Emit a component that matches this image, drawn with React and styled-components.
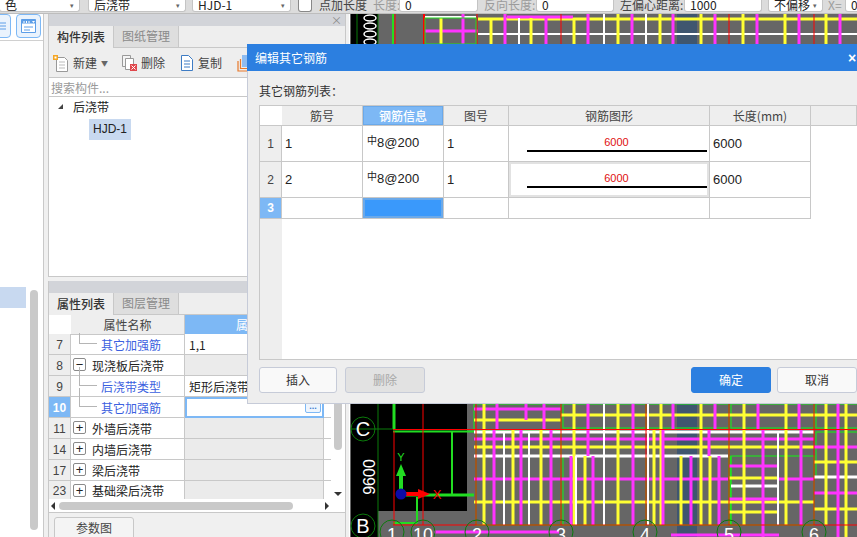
import React from "react";
import styled, { createGlobalStyle } from "styled-components";

const FONT = `"Noto Sans CJK SC", "Liberation Sans", sans-serif`;

const GlobalStyle = createGlobalStyle`
  html, body {
    margin: 0;
    padding: 0;
    width: 857px;
    height: 537px;
    overflow: hidden;
    background: #fff;
    font-family: ${FONT};
    font-size: 12px;
    color: #222;
  }
  * { box-sizing: border-box; }
`;

const Page = styled.div`
  position: relative;
  width: 857px;
  height: 537px;
  overflow: hidden;
  display: flex;
  flex-direction: column;
`;

/* top toolbar, cut off by the top of the window */
const TopBar = styled.div`
  height: 14px;
  flex: none;
  background: #dcdcdc;
  border-bottom: 1px solid #bdbdbd;
  display: flex;
  align-items: flex-start;
  overflow: hidden;
  font-size: 12px;
`;
const TopField = styled.div`
  flex: none;
  width: ${(p) => p.$w}px;
  margin-left: ${(p) => p.$ml || 0}px;
  height: 12px;
  background: #fff;
  border: 1px solid #c4c4c4;
  border-top: none;
  border-radius: 0 0 3px 3px;
  padding: 0 5px;
  display: flex;
  align-items: flex-start;
  justify-content: space-between;
  white-space: nowrap;
  line-height: 9px;
  overflow: hidden;
`;
const Caret = styled.span`
  color: #666;
  font-size: 7px;
  line-height: 10px;
`;
const TopCheck = styled.div`
  flex: none;
  width: 14px;
  height: 12px;
  margin-left: 7px;
  background: #fff;
  border: 1px solid #888;
  border-top: none;
  border-radius: 0 0 3px 3px;
`;
const TopLabel = styled.span`
  flex: none;
  margin-left: ${(p) => p.$ml || 0}px;
  width: ${(p) => p.$w}px;
  color: ${(p) => (p.$dim ? "#9b9b9b" : "#444")};
  white-space: nowrap;
  overflow: hidden;
  height: 12px;
  line-height: 9px;
`;

const Body = styled.div`
  flex: 1;
  display: flex;
  min-height: 0;
`;

/* far left strip */
const SideBar = styled.div`
  flex: none;
  width: 44px;
  background: #fff;
  border-right: 1px solid #c9c9c9;
  display: flex;
  flex-direction: column;
  position: relative;
`;
const SideTools = styled.div`
  height: 27px;
  border-bottom: 1px solid #d0d0d0;
  display: flex;
  gap: 5px;
  margin-left: -5px;
  align-items: flex-start;
`;
const SideTool = styled.div`
  width: 16px;
  height: 24px;
  flex: none;
  background: #eaf3fd;
  border: 1px solid #7db8f5;
  border-radius: 4px;
  display: flex;
  align-items: center;
  justify-content: center;
  & + & { width: 25px; }
`;
const SideRow = styled.div`
  width: 26px;
  height: 21px;
  margin-top: 246px;
  background: #c8d9f0;
`;
const SideScroll = styled.div`
  position: absolute;
  left: 30px;
  top: 276px;
  width: 8px;
  height: 240px;
  border-radius: 4px;
  background: #c9c9c9;
`;

/* component + property panels */
const PanelColumn = styled.div`
  flex: none;
  width: 305px;
  padding: 0 3px 0 4px;
  background: #f0f0f0;
  display: flex;
  flex-direction: column;
`;
const Panel = styled.div`
  flex: ${(p) => (p.$grow ? 1 : "none")};
  height: ${(p) => (p.$h ? p.$h + "px" : "auto")};
  border: 1px solid #c8c8c8;
  border-top: none;
  background: #fff;
  display: flex;
  flex-direction: column;
`;
const PanelTitle = styled.div`
  height: 12px;
  flex: none;
  background: #d2d4d9;
  display: flex;
  align-items: center;
  justify-content: flex-end;
  padding-right: 3px;
  color: #8b8b8b;
  font-size: 11px;
  line-height: 12px;
`;
const Tabs = styled.div`
  height: 22px;
  flex: none;
  display: flex;
  background: #eeeeee;
  border-bottom: 1px solid #c8c8c8;
`;
const Tab = styled.div`
  width: 65px;
  padding-bottom: 2px;
  display: flex;
  align-items: center;
  justify-content: center;
  font-size: 12px;
  font-weight: ${(p) => (p.$active ? 500 : 400)};
  color: ${(p) => (p.$active ? "#333" : "#8a8a8a")};
  background: ${(p) => (p.$active ? "#eeeeee" : "#dedede")};
  border-right: 1px solid #c8c8c8;
  ${(p) => p.$active && "margin-bottom: -1px;"}
`;
const ToolRow = styled.div`
  height: 30px;
  flex: none;
  background: #eeeeee;
  border-bottom: 1px solid #c8c8c8;
  display: flex;
  align-items: center;
  padding-left: 4px;
  overflow: hidden;
`;
const ToolButton = styled.div`
  display: flex;
  align-items: center;
  gap: 4px;
  flex: none;
  margin-right: ${(p) => p.$gap}px;
  color: #444;
  white-space: nowrap;
`;
const Search = styled.div`
  height: 19px;
  flex: none;
  border-bottom: 1px solid #c8c8c8;
  padding-left: 2px;
  color: #9a9a9a;
  line-height: 19px;
`;
const Tree = styled.div`
  flex: 1;
  padding: 0 0 0 9px;
`;
const TreeRoot = styled.div`
  display: flex;
  align-items: center;
  height: 19px;
  gap: 10px;
`;
const TreeArrow = styled.span`
  width: 0;
  height: 0;
  border-left: 5px solid transparent;
  border-bottom: 5px solid #444;
`;
const TreeLeaf = styled.div`
  margin: 3px 0 0 31px;
  width: 42px;
  height: 21px;
  background: #c8d9f0;
  font-size: 12px;
  line-height: 21px;
  text-align: center;
  font-family: "Liberation Sans", sans-serif;
`;

const Gap = styled.div`
  height: 4px;
  flex: none;
`;

/* property grid */
const PropGrid = styled.div`
  flex: 1;
  min-height: 0;
  overflow: hidden;
  position: relative;
  display: flex;
  flex-direction: column;
`;
const PropHeader = styled.div`
  height: 19px;
  flex: none;
  display: grid;
  grid-template-columns: 22px 114px 139px 7px;
  line-height: 19px;
  text-align: center;
`;
const PropHeadCell = styled.div`
  background: ${(p) => (p.$on ? "#7db8f5" : p.$blank ? "#fff" : "#eeeeee")};
  color: ${(p) => (p.$on ? "#fff" : "#444")};
  border-bottom: 1px solid #c8c8c8;
  border-right: ${(p) => (p.$blank ? "none" : "1px solid #c8c8c8")};
`;
const PropRow = styled.div`
  height: ${(p) => p.$h || 21}px;
  flex: none;
  display: grid;
  grid-template-columns: 22px 114px 139px 7px;
`;
const RowNum = styled.div`
  background: ${(p) => (p.$on ? "#7db8f5" : "#eeeeee")};
  color: ${(p) => (p.$on ? "#fff" : "#444")};
  font-weight: ${(p) => (p.$on ? 700 : 400)};
  font-family: "Liberation Sans", sans-serif;
  font-size: 12px;
  padding-top: 1px;
  display: flex;
  align-items: center;
  justify-content: center;
  border-bottom: 1px solid #c8c8c8;
  border-right: 1px solid #c8c8c8;
`;
const NameCell = styled.div`
  position: relative;
  display: flex;
  align-items: center;
  padding: 1px 0 0 ${(p) => (p.$child ? 30 : 21)}px;
  color: ${(p) => (p.$child ? "#3b5fe0" : "#222")};
  border-bottom: 1px solid #c8c8c8;
  border-right: 1px solid #c8c8c8;
  white-space: nowrap;
`;
const TreeLine = styled.span`
  position: absolute;
  left: 8px;
  top: ${(p) => (p.$top ? -9 : -1)}px;
  height: ${(p) => (p.$top ? 19 : 11)}px;
  width: 18px;
  border-left: 1px solid #b5b5b5;
  border-bottom: 1px solid #b5b5b5;
`;
const Toggle = styled.span`
  position: absolute;
  left: 2px;
  top: 3px;
  width: 13px;
  height: 13px;
  background: #fff;
  border: 1px solid #8a8a8a;
  border-radius: 2px;
  font: 13px/11px "Liberation Sans", sans-serif;
  text-align: center;
  color: #222;
`;
const ValueCell = styled.div`
  background: ${(p) => (p.$grey ? "#ebebeb" : "#fff")};
  display: flex;
  align-items: center;
  justify-content: space-between;
  padding: 1px 0 0 4px;
  border-bottom: 1px solid #c8c8c8;
  border-right: 1px solid #c8c8c8;
  white-space: nowrap;
  overflow: hidden;
  ${(p) => p.$edit && "border: 2px solid #7db8f5; padding: 0 1px 0 3px;"}
`;
const EndCell = styled.div`
  border-bottom: 1px solid #c8c8c8;
`;
const EllipsisBtn = styled.span`
  margin-left: auto;
  width: 16px;
  height: 11px;
  border: 1px solid #7db8f5;
  border-radius: 2px;
  background: #eef5fd;
  color: #3f7fd0;
  font: 700 9px/6px "Liberation Sans", sans-serif;
  text-align: center;
`;
const VScrollThumb = styled.div`
  position: absolute;
  right: 3px;
  top: 38px;
  width: 8px;
  height: 97px;
  border-radius: 4px;
  background: #c9c9c9;
`;
const VScrollDown = styled.div`
  position: absolute;
  right: 3px;
  bottom: 3px;
  border-left: 4px solid transparent;
  border-right: 4px solid transparent;
  border-top: 4px solid #333;
`;
const HScroll = styled.div`
  height: 14px;
  flex: none;
  background: #fff;
  display: flex;
  align-items: center;
  padding: 0 2px;
  gap: 4px;
  border-bottom: 1px solid #c8c8c8;
`;
const HArrow = styled.span`
  border-top: 4px solid transparent;
  border-bottom: 4px solid transparent;
  ${(p) => (p.$left ? "border-right: 4px solid #333;" : "border-left: 4px solid #333;")}
  ${(p) => !p.$left && "margin-left: 28px;"}
`;
const HThumb = styled.div`
  width: 234px;
  height: 8px;
  border-radius: 4px;
  background: #c9c9c9;
`;
const Footer = styled.div`
  height: 24px;
  flex: none;
  background: #f0f0f0;
  padding: 4px 0 0 5px;
`;
const FooterTab = styled.div`
  width: 80px;
  height: 24px;
  background: #f4f4f4;
  border: 1px solid #c8c8c8;
  border-radius: 3px 3px 0 0;
  text-align: center;
  line-height: 20px;
  color: #444;
`;

/* CAD canvas */
const Canvas = styled.div`
  flex: 1;
  min-width: 0;
  background: #fff;
  padding-left: 1px;
  svg { display: block; }
`;

/* modal dialog */
const Dialog = styled.div`
  position: absolute;
  left: 247px;
  top: 44px;
  width: 612px;
  height: 360px;
  background: #eeeeee;
  border: 1px solid #c6cbd8;
  border-top: none;
  display: flex;
  flex-direction: column;
`;
const DialogHead = styled.div`
  height: 27px;
  flex: none;
  margin-left: -1px;
  margin-right: -1px;
  background: #2c7fe0;
  color: #fff;
  display: flex;
  align-items: center;
  justify-content: space-between;
  padding: 0 0 0 8px;
  font-size: 12px;
`;
const CloseMark = styled.span`
  width: 11px;
  color: #fff;
  font: 700 14px/14px "Liberation Sans", sans-serif;
`;
const DialogBody = styled.div`
  flex: 1;
  padding: 11px 0 12px 11px;
  display: flex;
  flex-direction: column;
  min-height: 0;
`;
const ListLabel = styled.div`
  height: 23px;
  line-height: 17px;
  flex: none;
  color: #333;
`;
const RebarGrid = styled.div`
  height: 255px;
  flex: none;
  background: #fff;
  border: 1px solid #c8c8c8;
  display: flex;
  flex-direction: column;
  position: relative;
`;
const RebarRow = styled.div`
  height: ${(p) => p.$h}px;
  flex: none;
  display: grid;
  grid-template-columns: 22px 81px 81px 65px 201px 101px ${(p) => (p.$head ? "1fr" : "")};
`;
const RebarHeadCell = styled.div`
  background: ${(p) => (p.$on ? "#7db8f5" : p.$blank ? "#fff" : "#eeeeee")};
  color: ${(p) => (p.$on ? "#fff" : "#444")};
  font-weight: ${(p) => (p.$on ? 500 : 400)};
  text-align: center;
  line-height: 19px;
  border-bottom: 1px solid #c8c8c8;
  border-right: ${(p) => (p.$blank ? "none" : "1px solid #c8c8c8")};
  ${(p) => p.$on && "box-shadow: inset 0 0 0 1px #6aa9ea;"}
`;
const RebarNum = styled.div`
  background: ${(p) => (p.$on ? "#7db8f5" : "#eeeeee")};
  color: ${(p) => (p.$on ? "#fff" : "#444")};
  font-weight: ${(p) => (p.$on ? 700 : 400)};
  font-family: "Liberation Sans", sans-serif;
  display: flex;
  align-items: center;
  justify-content: center;
  border-bottom: 1px solid #c8c8c8;
  border-right: 1px solid #c8c8c8;
`;
const RebarCell = styled.div`
  padding: ${(p) => (p.$info ? "0 0 3px 4px" : "0 0 0 3px")};
  display: flex;
  align-items: center;
  font-family: "Liberation Sans", "Noto Sans CJK SC", sans-serif;
  font-size: 13px;
  color: #222;
  background: ${(p) => (p.$sel ? "#3a99fb" : "#fff")};
  border-bottom: 1px solid #c8c8c8;
  border-right: 1px solid #c8c8c8;
  ${(p) => p.$sel && "box-shadow: inset 0 0 0 2px #6aa9ea;"}
`;
const RebarGrade = styled.span`
  font-size: 10px;
  line-height: 0;
  position: relative;
  top: -3px;
`;
const ShapeCell = styled.div`
  display: flex;
  flex-direction: column;
  align-items: center;
  justify-content: flex-start;
  padding: 9px 0 0 15px;
  border-bottom: 1px solid #c8c8c8;
  border-right: 1px solid #c8c8c8;
  ${(p) => p.$framed && "box-shadow: inset 0 0 0 2px #e2e2e2;"}
`;
const ShapeLen = styled.span`
  color: #e01010;
  font: 11px/14px "Liberation Sans", sans-serif;
`;
const ShapeBar = styled.span`
  width: 180px;
  height: 2px;
  background: #000;
  margin-top: 1px;
`;
const RebarFill = styled.div`
  flex: 1;
  width: 22px;
  background: #eeeeee;
`;
const BtnRow = styled.div`
  display: flex;
  margin-top: 7px;
  gap: 8px;
  height: 26px;
  flex: none;
`;
const Btn = styled.div`
  flex: none;
  width: ${(p) => p.$w}px;
  margin-left: ${(p) => p.$ml || 0}px;
  border: 1px solid ${(p) => (p.$primary ? "#2c7fe0" : "#c6cbd8")};
  border-radius: 3px;
  background: ${(p) => (p.$primary ? "#2c7fe0" : p.$off ? "#e2e2e2" : "#f9f9f9")};
  color: ${(p) => (p.$primary ? "#fff" : p.$off ? "#a8a8a8" : "#333")};
  text-align: center;
  line-height: 24px;
`;

const NewIcon = () => (
  <svg width="16" height="18" viewBox="0 0 16 18">
    <path d="M3.500 3.500h8l3 3v11h-11z" fill="#fff" stroke="#999" />
    <path d="M6 8h6M6 11h6M6 14h6" stroke="#bbb" />
    <path d="M0 1h5v5H0z" fill="#f5a623" />
    <path d="M1.500 2.500h2v2h-2z" fill="#fff" />
  </svg>
);
const DeleteIcon = () => (
  <svg width="16" height="18" viewBox="0 0 16 18">
    <path d="M1.500 1.500h8v11h-8z" fill="#f4f4f4" stroke="#999" />
    <path d="M4.500 4.500h8v11h-8z" fill="#fff" stroke="#999" />
    <path d="M9 10h7v7H9z" fill="#e0474c" />
    <path d="M10.500 11.500l4 4M14.500 11.500l-4 4" stroke="#fff" />
  </svg>
);
const CopyIcon = () => (
  <svg width="14" height="18" viewBox="0 0 14 18">
    <path d="M1.500 1.500h7l4 4v11h-11z" fill="#fff" stroke="#3e7cc4" />
    <path d="M4 7h6M4 10h6M4 13h6" stroke="#3e7cc4" />
  </svg>
);
const PasteIcon = () => (
  <svg width="14" height="18" viewBox="0 0 14 18">
    <path d="M1 7v10h9" fill="none" stroke="#e8792b" strokeWidth="1.200" />
    <path d="M3.500 5v9.500h9" fill="none" stroke="#e8792b" strokeWidth="1.200" />
    <path d="M5 1h9v12H5z" fill="#8fbcf0" />
  </svg>
);
const WindowIcon = () => (
  <svg width="15" height="14" viewBox="0 0 15 14">
    <path d="M0.500 0.500h14v13h-14z" fill="#fff" stroke="#5c9ee8" />
    <path d="M0.500 0.500h14v4h-14z" fill="#5c9ee8" />
    <path d="M3 2v2M5.500 2v2M8 2v2" stroke="#fff" />
    <path d="M11 2h3l-1.500 2z" fill="#fff" />
    <path d="M3 8h9M3 11h6" stroke="#5c9ee8" />
  </svg>
);
const ListIcon = () => (
  <svg width="12" height="12" viewBox="0 0 12 12">
    <path d="M0 3h9M0 6h9M0 9h9" stroke="#5c9ee8" />
  </svg>
);

/* canvas picture coordinates are page px minus (349, 14) */
const OX = 349;
const OY = 14;
const GREY = "#666666";
const YEL = "#ffff33";
const MAG = "#ff33ff";
const GRN = "#22dd22";
const RED = "#ff0000";

const L = ({ x1, y1, x2, y2, c, w = 1 }) => (
  <line x1={x1 - OX} y1={y1 - OY} x2={x2 - OX} y2={y2 - OY} stroke={c} strokeWidth={w} />
);
const V = (x, a, b, c, w) => <L key={`v${x}-${a}-${c}`} x1={x} y1={a} x2={x} y2={b} c={c} w={w} />;
const H = (y, a, b, c, w) => <L key={`h${y}-${a}-${c}`} x1={a} y1={y} x2={b} y2={y} c={c} w={w} />;

const topStrip = [
  [H, 19, 477, 857, YEL, 3],
  [H, 34, 477, 857, "#fff", 2],
  [H, 17, 506, 572, MAG, 3],
  [H, 31, 422, 477, MAG, 3],
  [H, 17, 423, 475, "#fff", 2],
  [V, 440, 18, 44, YEL, 3],
  [V, 490, 18, 44, YEL, 3],
  [V, 530, 18, 44, YEL, 3],
  [V, 573, 18, 44, YEL, 3],
  [V, 617, 14, 44, YEL, 3],
  [V, 659, 14, 44, YEL, 3],
  [V, 700, 14, 44, YEL, 3],
  [V, 742, 14, 44, YEL, 3],
  [V, 784, 14, 44, YEL, 3],
  [V, 825, 14, 44, YEL, 3],
  [V, 518, 18, 44, "#fff", 2],
  [V, 603, 14, 44, "#fff", 2],
  [V, 645, 14, 44, "#fff", 2],
  [V, 462, 14, 44, MAG, 3],
  [V, 504, 14, 44, MAG, 3],
  [V, 545, 18, 44, MAG, 3],
  [V, 587, 14, 44, MAG, 3],
  [V, 631, 14, 44, MAG, 3],
  [V, 672, 14, 44, MAG, 3],
  [V, 714, 14, 44, MAG, 3],
  [V, 756, 14, 44, MAG, 3],
  [V, 798, 14, 44, MAG, 3],
  [V, 839, 14, 44, MAG, 3],
  [V, 392, 14, 44, GRN, 2],
  [V, 394, 14, 44, RED, 1],
  [V, 423, 14, 44, RED, 2],
  [V, 476, 14, 44, RED, 1],
  [V, 560, 14, 44, RED, 1],
  [V, 728, 14, 44, RED, 1],
  [V, 813, 14, 44, RED, 1],
];

const bottomVertical = [
  [483, 404, 525, YEL],
  [512, 430, 525, YEL],
  [540, 430, 525, YEL],
  [573, 404, 525, YEL],
  [584, 456, 525, YEL],
  [617, 404, 525, YEL],
  [660, 404, 525, YEL],
  [653, 430, 525, YEL],
  [700, 404, 525, YEL],
  [680, 456, 525, YEL],
  [709, 456, 525, YEL],
  [743, 404, 525, YEL],
  [785, 404, 525, YEL],
  [825, 404, 525, YEL],
  [845, 404, 537, YEL],
  [503, 432, 525, "#fff"],
  [528, 432, 525, "#fff"],
  [575, 456, 525, "#fff"],
  [603, 404, 525, "#fff"],
  [647, 404, 525, "#fff"],
  [777, 432, 525, "#fff"],
  [493, 430, 525, MAG],
  [496, 404, 430, MAG],
  [520, 430, 525, MAG],
  [525, 404, 420, MAG],
  [543, 404, 430, MAG],
  [550, 430, 525, MAG],
  [570, 456, 525, MAG],
  [587, 404, 456, MAG],
  [592, 456, 525, MAG],
  [632, 404, 525, MAG],
  [662, 430, 525, MAG],
  [672, 404, 430, MAG],
  [690, 456, 525, MAG],
  [708, 430, 456, MAG],
  [714, 404, 430, MAG],
  [718, 456, 525, MAG],
  [757, 404, 430, MAG],
  [762, 430, 537, MAG],
  [798, 404, 430, MAG],
  [800, 430, 525, MAG],
  [837, 404, 537, MAG],
];

const bottomHorizontal = [
  [415, 560, 857, YEL],
  [420, 473, 560, YEL],
  [447, 473, 813, YEL],
  [502, 473, 813, YEL],
  [478, 728, 778, YEL],
  [512, 728, 778, YEL],
  [462, 813, 857, YEL],
  [509, 813, 857, YEL],
  [432, 473, 813, "#fff"],
  [456, 473, 727, "#fff"],
  [486, 730, 778, "#fff"],
  [477, 813, 857, "#fff"],
  [409, 473, 560, MAG],
  [439, 473, 813, MAG],
  [479, 473, 727, MAG],
  [479, 778, 813, MAG],
  [466, 728, 778, MAG],
  [499, 728, 778, MAG],
  [447, 813, 857, MAG],
  [493, 813, 857, MAG],
  [532, 433, 558, MAG],
  [535, 670, 778, MAG],
];

const axisBubbles = [
  [391, "1"],
  [422, "10"],
  [476, "2"],
  [560, "3"],
  [644, "4"],
  [728, "5"],
  [813, "6"],
];

const CadDrawing = () => (
  <svg width="508" height="523" viewBox="0 0 508 523" fontFamily="'Liberation Sans', sans-serif">
    <rect x="0" y="0" width="508" height="523" fill={GREY} />
    {/* black axis column + upper block */}
    <rect x="1" y="0" width="27" height="30" fill="#000" />
    <rect x="1" y="390" width="27" height="133" fill="#000" />
    <rect x="28" y="390" width="89" height="107" fill="#000" />
    <rect x="327" y="0" width="20" height="523" fill="#3f566f" />
    {V(377, 14, 44, "#0b7a0b", 1)}
    {V(356, 14, 44, "#0b7a0b", 1)}
    {[16, 24, 32, 40].map((y) => (
      <ellipse key={y} cx={369 - OX} cy={y - OY + 2} rx="6" ry="3" fill="none" stroke="#fff" strokeWidth="1.500" />
    ))}
    {topStrip.map(([fn, ...args], i) => (
      <React.Fragment key={i}>{fn(...args)}</React.Fragment>
    ))}
    <rect x="75" y="4" width="51" height="26" fill="none" stroke={GRN} />

    {/* green room outlines */}
    {[
      [473, 404, 87, 26],
      [562, 404, 83, 24],
      [647, 404, 81, 24],
      [730, 404, 83, 24],
      [815, 404, 42, 24],
      [475, 432, 85, 93],
      [562, 456, 83, 69],
      [647, 432, 81, 93],
      [730, 456, 83, 69],
      [815, 432, 42, 45],
    ].map(([x, y, w, h]) => (
      <rect key={`${x}-${y}`} x={x - OX} y={y - OY} width={w} height={h} fill="none" stroke={GRN} strokeWidth="1.200" />
    ))}
    {V(729, 456, 525, GRN, 3)}
    {bottomHorizontal.map(([y, a, b, c]) => H(y, a, b, c, 3))}
    {bottomVertical.map(([x, a, b, c]) => V(x, a, b, c, c === "#fff" ? 2 : 3))}

    {/* drawing lines on black */}
    {V(393, 404, 429, GRN, 3)}
    {H(431.5, 392, 473, GRN, 2)}
    {V(451, 431, 495, GRN, 2)}
    {H(495, 405, 473, GRN, 3)}
    {V(416, 497, 523, GRN, 2)}
    {H(523, 392, 416, GRN, 2)}
    {V(393, 431, 525, RED, 1)}
    {V(422, 404, 525, RED, 1)}
    {V(475, 404, 525, RED, 1)}
    {V(560, 404, 525, RED, 1)}
    {V(645, 404, 525, RED, 1)}
    {V(728, 404, 525, RED, 1)}
    {V(813, 404, 525, RED, 1)}
    {H(429.500, 392, 857, RED, 1)}
    {H(525, 392, 857, RED, 1)}
    {H(429, 350, 392, "#0b7a0b", 1)}
    {V(377, 404, 537, "#0b7a0b", 1)}

    {/* axis bubbles */}
    <circle cx={362 - OX} cy={429 - OY} r="12" fill="none" stroke="#0b7a0b" />
    <text x={362 - OX} y={436 - OY} fontSize="20" fill="#fff" textAnchor="middle">C</text>
    <circle cx={362 - OX} cy={526 - OY} r="12" fill="none" stroke="#0b7a0b" />
    <text x={362 - OX} y={533 - OY} fontSize="20" fill="#fff" textAnchor="middle">B</text>
    <text
      x="0"
      y="0"
      fontSize="16"
      fill="#fff"
      textAnchor="middle"
      transform={`translate(${374 - OX} ${477 - OY}) rotate(-90)`}
    >
      9600
    </text>
    {axisBubbles.map(([x, t]) => (
      <g key={t}>
        <circle cx={x - OX} cy={532 - OY} r="12" fill="none" stroke="#0b7a0b" />
        <text x={x - OX} y={541 - OY} fontSize="18" fill="#fff" textAnchor="middle">{t}</text>
      </g>
    ))}

    {/* UCS axes */}
    <rect x={398 - OX} y={475 - OY} width="4" height="16" fill={GRN} />
    <path d={`M${400 - OX} ${464 - OY}l5 12h-10z`} fill={GRN} />
    <text x={400 - OX} y={461 - OY} fontSize="11" fill={GRN} textAnchor="middle">Y</text>
    <rect x={404 - OX} y={492 - OY} width="14" height="4" fill={RED} />
    <path d={`M${429 - OX} ${494 - OY}l-12 -5v10z`} fill={RED} />
    <text x={436 - OX} y={499 - OY} fontSize="13" fill={RED} textAnchor="middle">X</text>
    <circle cx={400 - OX} cy={494 - OY} r="5.500" fill="#0b0ba8" />
  </svg>
);

const propRows = [
  { n: "7", name: "其它加强筋", child: true, value: "1,1" },
  { n: "8", name: "现浇板后浇带", toggle: "−", grey: true },
  { n: "9", name: "后浇带类型", child: true, value: "矩形后浇带" },
  { n: "10", name: "其它加强筋", child: true, edit: true, on: true },
  { n: "11", name: "外墙后浇带", toggle: "+", grey: true },
  { n: "14", name: "内墙后浇带", toggle: "+", grey: true },
  { n: "17", name: "梁后浇带", toggle: "+", grey: true },
  { n: "23", name: "基础梁后浇带", toggle: "+", grey: true, h: 18 },
];

const rebarRows = [
  { n: "1", no: "1" },
  { n: "2", no: "2", framed: true },
];

export default function App() {
  return (
    <Page>
      <GlobalStyle />
      <TopBar>
        <TopField $w={81} $ml={-1}>
          <span>色</span>
          <Caret>▾</Caret>
        </TopField>
        <TopField $w={98} $ml={8}>
          <span>后浇带</span>
          <Caret>▾</Caret>
        </TopField>
        <TopField $w={99} $ml={6}>
          <span>HJD-1</span>
          <Caret>▾</Caret>
        </TopField>
        <TopCheck />
        <TopLabel $ml={7} $w={48}>点加长度</TopLabel>
        <TopLabel $dim $ml={6} $w={26}>长度:</TopLabel>
        <TopField $w={79}>0</TopField>
        <TopLabel $dim $ml={6} $w={52}>反向长度:</TopLabel>
        <TopField $w={78}>0</TopField>
        <TopLabel $ml={6} $w={64}>左偏心距离:</TopLabel>
        <TopField $w={78}>1000</TopField>
        <TopField $w={55} $ml={6}>
          <span>不偏移</span>
          <Caret>▾</Caret>
        </TopField>
        <TopLabel $dim $ml={5} $w={17}>X=</TopLabel>
        <TopField $w={20}>0</TopField>
      </TopBar>
      <Body>
        <SideBar>
          <SideTools>
            <SideTool>
              <ListIcon />
            </SideTool>
            <SideTool>
              <WindowIcon />
            </SideTool>
          </SideTools>
          <SideRow />
          <SideScroll />
        </SideBar>
        <PanelColumn>
          <Panel $h={263}>
            <PanelTitle>×</PanelTitle>
            <Tabs>
              <Tab $active>构件列表</Tab>
              <Tab>图纸管理</Tab>
            </Tabs>
            <ToolRow>
              <ToolButton $gap={13}>
                <NewIcon />
                新建
                <Caret>▼</Caret>
              </ToolButton>
              <ToolButton $gap={15}>
                <DeleteIcon />
                删除
              </ToolButton>
              <ToolButton $gap={15}>
                <CopyIcon />
                复制
              </ToolButton>
              <ToolButton $gap={0}>
                <PasteIcon />
              </ToolButton>
            </ToolRow>
            <Search>搜索构件...</Search>
            <Tree>
              <TreeRoot>
                <TreeArrow />
                后浇带
              </TreeRoot>
              <TreeLeaf>HJD-1</TreeLeaf>
            </Tree>
          </Panel>
          <Gap />
          <Panel $grow>
            <PanelTitle />
            <Tabs>
              <Tab $active>属性列表</Tab>
              <Tab>图层管理</Tab>
            </Tabs>
            <PropGrid>
              <PropHeader>
                <PropHeadCell $blank />
                <PropHeadCell>属性名称</PropHeadCell>
                <PropHeadCell $on>属性值</PropHeadCell>
                <PropHeadCell $blank />
              </PropHeader>
              {propRows.map((r) => (
                <PropRow key={r.n} $h={r.h}>
                  <RowNum $on={r.on}>{r.n}</RowNum>
                  <NameCell $child={r.child}>
                    {r.child && <TreeLine $top={r.n === "10" || r.n === "9"} />}
                    {r.toggle && <Toggle>{r.toggle}</Toggle>}
                    {r.name}
                  </NameCell>
                  <ValueCell $grey={r.grey} $edit={r.edit}>
                    {r.value}
                    {r.edit && <EllipsisBtn>...</EllipsisBtn>}
                  </ValueCell>
                  <EndCell />
                </PropRow>
              ))}
              <VScrollThumb />
              <VScrollDown />
            </PropGrid>
            <HScroll>
              <HArrow $left />
              <HThumb />
              <HArrow />
            </HScroll>
            <Footer>
              <FooterTab>参数图</FooterTab>
            </Footer>
          </Panel>
        </PanelColumn>
        <Canvas>
          <CadDrawing />
        </Canvas>
      </Body>

      <Dialog>
        <DialogHead>
          编辑其它钢筋
          <CloseMark>×</CloseMark>
        </DialogHead>
        <DialogBody>
          <ListLabel>其它钢筋列表：</ListLabel>
          <RebarGrid>
            <RebarRow $h={20} $head>
              <RebarHeadCell $blank />
              <RebarHeadCell>筋号</RebarHeadCell>
              <RebarHeadCell $on>钢筋信息</RebarHeadCell>
              <RebarHeadCell>图号</RebarHeadCell>
              <RebarHeadCell>钢筋图形</RebarHeadCell>
              <RebarHeadCell>长度(mm)</RebarHeadCell>
              <RebarHeadCell />
            </RebarRow>
            {rebarRows.map((r) => (
              <RebarRow key={r.n} $h={36}>
                <RebarNum>{r.n}</RebarNum>
                <RebarCell>{r.no}</RebarCell>
                <RebarCell $info>
                  <span>
                    <RebarGrade>中</RebarGrade>8@200
                  </span>
                </RebarCell>
                <RebarCell>1</RebarCell>
                <ShapeCell $framed={r.framed}>
                  <ShapeLen>6000</ShapeLen>
                  <ShapeBar />
                </ShapeCell>
                <RebarCell>6000</RebarCell>
              </RebarRow>
            ))}
            <RebarRow $h={21}>
              <RebarNum $on>3</RebarNum>
              <RebarCell />
              <RebarCell $sel />
              <RebarCell />
              <RebarCell />
              <RebarCell />
            </RebarRow>
            <RebarFill />
          </RebarGrid>
          <BtnRow>
            <Btn $w={78}>插入</Btn>
            <Btn $w={80} $off>删除</Btn>
            <Btn $w={80} $primary $ml={258}>确定</Btn>
            <Btn $w={80} $ml={-2}>取消</Btn>
          </BtnRow>
        </DialogBody>
      </Dialog>
    </Page>
  );
}
